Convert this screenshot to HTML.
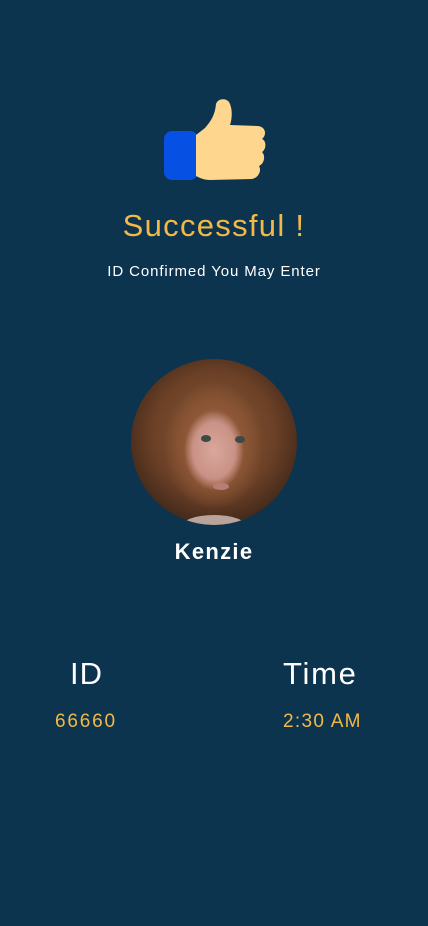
<!DOCTYPE html>
<html><head><meta charset="utf-8"><style>
html,body{margin:0;padding:0}
body{width:428px;height:926px;background:#0c344f;position:relative;overflow:hidden;font-family:"Liberation Sans",sans-serif}
.t{position:absolute;left:0;width:428px;text-align:center}
.photo{position:absolute;left:131px;top:359px;width:166px;height:166px;border-radius:50%;overflow:hidden;
background:radial-gradient(ellipse 30px 40px at 50% 55%,#d9a79c 0,#c99286 70%,transparent 100%),
radial-gradient(ellipse 50px 64px at 50% 52%,#b07a62 0,#8c5636 60%,transparent 100%),
radial-gradient(circle at 50% 45%,#8a5a36 0,#6b4026 50%,#3a2418 80%,#2a1c16 100%)}
.photo i{position:absolute;border-radius:50%}
</style></head><body>
<svg style="position:absolute;left:160px;top:96px" width="110" height="90" viewBox="160 96 110 90">
<rect x="164" y="131" width="34" height="49" rx="8" fill="#0651e3"/>
<path d="M196 135 L205 128 C211 121 215 115 216 104 C218 98 226 98 229 102 C233 109 232 119 230 125 L258 126 C266 127 267 135 262 139 C267 141 266 150 262 152 C266 156 264 164 259 166 C262 171 258 178 252 179 L210 180 C204 180 200 178 196 176 Z" fill="#fed68e"/>
</svg>
<div class="t" style="top:208px;font-size:31px;color:#f2b946;letter-spacing:1.3px">Successful !</div>
<div class="t" style="top:263px;font-size:15px;color:#fff;letter-spacing:0.9px">ID Confirmed You May Enter</div>
<div class="photo">
<i style="left:70px;top:76px;width:10px;height:7px;background:#3a4a44"></i>
<i style="left:104px;top:77px;width:10px;height:7px;background:#3a4a44"></i>
<i style="left:82px;top:124px;width:16px;height:7px;background:#b97d78"></i>
<i style="left:50px;top:156px;width:66px;height:24px;background:#b9a49a"></i>
</div>
<div class="t" style="top:539px;font-size:22px;font-weight:bold;color:#fff;letter-spacing:1.3px">Kenzie</div>
<div style="position:absolute;left:70px;top:656px;font-size:31px;color:#fff;letter-spacing:1px">ID</div>
<div style="position:absolute;left:283px;top:656px;font-size:31px;color:#fff;letter-spacing:1.7px">Time</div>
<div style="position:absolute;left:55px;top:711px;font-size:19px;color:#f2b946;letter-spacing:1.8px">66660</div>
<div style="position:absolute;left:283px;top:711px;font-size:19px;color:#f2b946;letter-spacing:1.3px">2:30 AM</div>
</body></html>
